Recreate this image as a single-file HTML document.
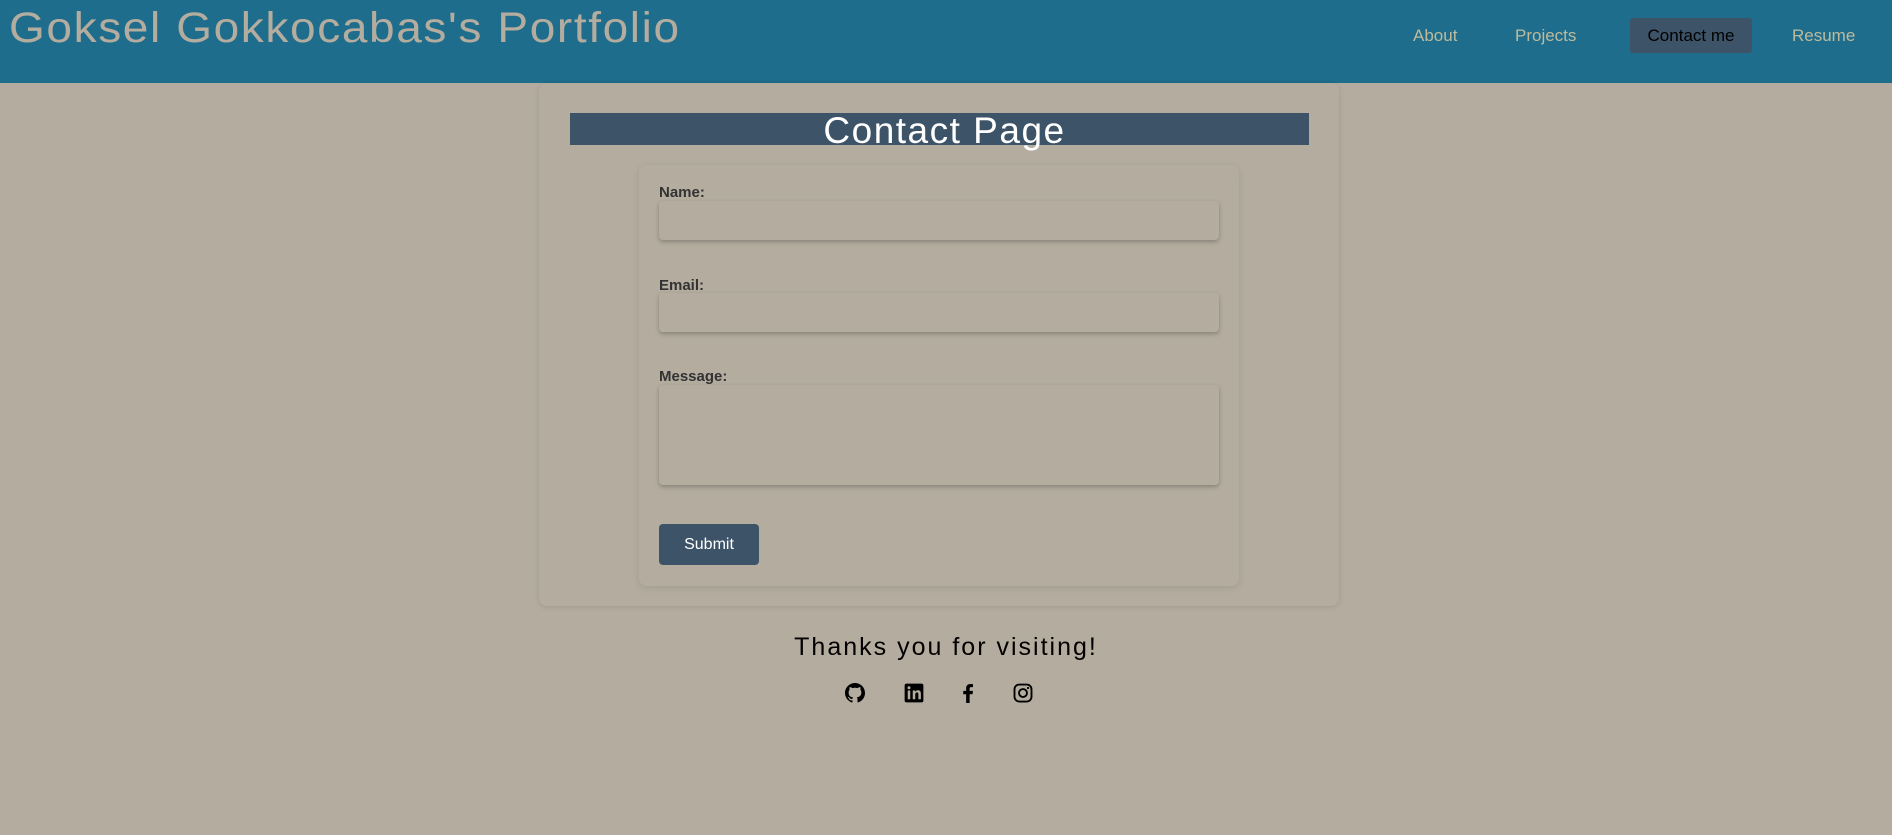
<!DOCTYPE html>
<html><head><meta charset="utf-8"><style>
*{box-sizing:border-box;margin:0;padding:0}
body{width:1892px;height:835px;background:#b4ad9f;font-family:"Liberation Sans",sans-serif;position:relative;overflow:hidden}
.hdr{position:absolute;left:0;top:0;width:1892px;height:83px;background:#1e6d8c}
.title{position:absolute;left:9px;top:4px;font-size:43px;color:#b4ad9f;letter-spacing:1.5px;transform:scaleX(1.07);transform-origin:left;white-space:nowrap;font-weight:normal}
.nav{position:absolute;top:18px;height:35px;line-height:35px;font-size:17px;color:#bdbb9c;white-space:nowrap}
.btn{background:#3d5368;color:#000;border-radius:3px;text-align:center}
.card{position:absolute;left:539px;top:83px;width:800px;height:523px;border-radius:8px;box-shadow:0 1px 6px rgba(0,0,0,.12)}
.bar{position:absolute;left:570px;top:113px;width:739px;height:32px;background:#3d5368}
.bar span{position:absolute;left:10px;right:0;top:-3px;text-align:center;color:#fff;font-size:37px;letter-spacing:1.5px}
.form{position:absolute;left:639px;top:165px;width:600px;height:421px;border-radius:8px;box-shadow:0 2px 8px rgba(0,0,0,.1)}
label{position:absolute;left:659px;font-size:15px;font-weight:bold;color:#333}
.in{position:absolute;left:659px;width:560px;border-radius:4px;box-shadow:0 2px 5px rgba(0,0,0,.25)}
.sub{position:absolute;left:659px;top:524px;width:100px;height:41px;background:#3d5368;color:#fff;border-radius:4px;font-size:16px;text-align:center;line-height:41px}
.thx{position:absolute;left:0;width:1892px;top:633px;text-align:center;font-size:25px;letter-spacing:2px;color:#000}
.ic{position:absolute;top:683px;width:20px;height:20px}
</style></head><body>
<div class="hdr">
<div class="title">Goksel Gokkocabas's Portfolio</div>
<div class="nav" style="left:1413px">About</div>
<div class="nav" style="left:1515px">Projects</div>
<div class="nav btn" style="left:1630px;width:122px">Contact me</div>
<div class="nav" style="left:1792px">Resume</div>
</div>
<div class="card"></div>
<div class="bar"><span>Contact Page</span></div>
<div class="form"></div>
<label style="top:184px">Name:</label>
<div class="in" style="top:201px;height:39px"></div>
<label style="top:277px">Email:</label>
<div class="in" style="top:293px;height:39px"></div>
<label style="top:368px">Message:</label>
<div class="in" style="top:385px;height:100px"></div>
<div class="sub">Submit</div>
<div class="thx">Thanks you for visiting!</div>
<svg class="ic" style="left:845px" viewBox="0 0 16 16"><path fill="#000" d="M8 0C3.6 0 0 3.6 0 8c0 3.5 2.3 6.5 5.5 7.6.4.1.5-.2.5-.4v-1.4c-2.2.5-2.7-1-2.7-1-.4-.9-.9-1.2-.9-1.2-.7-.5.1-.5.1-.5.8.1 1.2.8 1.2.8.7 1.2 1.900.9 2.3.7.1-.5.3-.9.5-1.1-1.8-.2-3.6-.9-3.6-4 0-.9.3-1.6.8-2.1-.1-.2-.4-1 .1-2.1 0 0 .7-.2 2.2.8.6-.2 1.3-.3 2-.3s1.4.1 2 .3c1.5-1 2.2-.8 2.2-.8.4 1.1.2 1.9.1 2.1.5.6.8 1.3.8 2.1 0 3.1-1.9 3.7-3.600 3.9.3.3.5.8.5 1.5v2.2c0 .2.1.5.6.4C13.7 14.5 16 11.5 16 8c0-4.4-3.6-8-8-8z"/></svg>
<svg class="ic" style="left:904px" viewBox="0 0 16 16"><rect x="0.5" y="0.5" width="15" height="15" rx="1.5" fill="#000"/><rect x="3" y="6" width="2" height="7" fill="#b4ad9f"/><circle cx="4" cy="3.8" r="1.2" fill="#b4ad9f"/><path fill="#b4ad9f" d="M7 6h2v1c.4-.7 1.2-1.2 2.2-1.2 1.7 0 2.3 1 2.3 2.8V13h-2V9c0-.9-.3-1.5-1.1-1.5S9 8.1 9 9v4H7z"/></svg>
<svg class="ic" style="left:958px" viewBox="0 0 16 16"><path fill="#000" d="M9.3 16V9h2.3l.4-2.7H9.3V4.6c0-.8.2-1.3 1.3-1.3H12V.9C11.8.9 10.9.8 9.9.8 7.8.8 6.5 2 6.5 4.3v2H4.2V9h2.3v7z"/></svg>
<svg class="ic" style="left:1013px" viewBox="0 0 16 16"><rect x="1.2" y="1.2" width="13.6" height="13.6" rx="3.8" fill="none" stroke="#000" stroke-width="1.5"/><circle cx="8" cy="8" r="3.2" fill="none" stroke="#000" stroke-width="1.5"/><circle cx="12" cy="4" r=".9" fill="#000"/></svg>
</body></html>
